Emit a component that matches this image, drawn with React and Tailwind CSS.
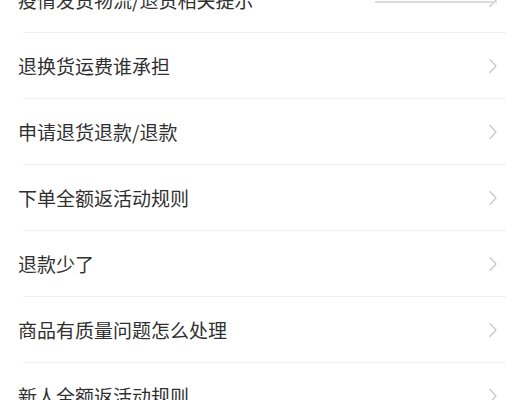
import React from 'react';

const items = [
  '疫情发货物流/退货相关提示',
  '退换货运费谁承担',
  '申请退货退款/退款',
  '下单全额返活动规则',
  '退款少了',
  '商品有质量问题怎么处理',
  '新人全额返活动规则',
];

function Chevron() {
  return (
    <svg width="10" height="16" viewBox="0 0 10 16" fill="none" className="shrink-0">
      <path d="M2 1.5 L8 8 L2 14.5" stroke="#c9c9c9" strokeWidth="1.3" strokeLinecap="round" strokeLinejoin="round" />
    </svg>
  );
}

export default function App() {
  return (
    <div
      className="relative w-[506px] h-[400px] overflow-hidden bg-white"
      style={{ fontFamily: '"Noto Sans CJK SC", "Noto Sans", sans-serif' }}
    >
      <div className="mt-[-33px] flex flex-col">
        {items.map((text) => (
          <div key={text} className="flex flex-col h-[66px]">
            <div className="flex flex-1 items-center justify-between pl-[18px] pr-[8px]">
              <span className="text-[19px] leading-none text-[#303030]">{text}</span>
              <Chevron />
            </div>
            <div className="ml-[23px] h-px bg-[#f1f1f1]" />
          </div>
        ))}
      </div>
      {/* thin overlay line at the top right */}
      <div className="absolute left-[375px] top-[1px] w-[122px] h-[2px] bg-[#dcdcdc]" />
    </div>
  );
}
